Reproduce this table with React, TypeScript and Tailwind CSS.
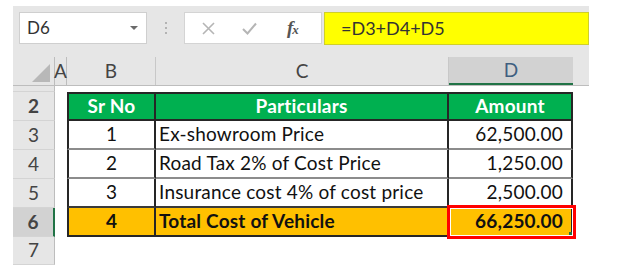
import { ReactNode } from 'react'

const font = "font-['Lato','Noto_Sans',sans-serif]"

type Row = {
  n: number
  sr: string
  text: string
  amount: string
  kind: 'head' | 'data' | 'total'
  bottom: string
}

const rows: Row[] = [
  { n: 2, sr: 'Sr No', text: 'Particulars', amount: 'Amount', kind: 'head', bottom: 'border-b-[#262626]' },
  { n: 3, sr: '1', text: 'Ex-showroom Price', amount: '62,500.00', kind: 'data', bottom: 'border-b-[#8c8c8c]' },
  { n: 4, sr: '2', text: 'Road Tax 2% of Cost Price', amount: '1,250.00', kind: 'data', bottom: 'border-b-[#8c8c8c]' },
  { n: 5, sr: '3', text: 'Insurance cost 4% of cost price', amount: '2,500.00', kind: 'data', bottom: 'border-b-[#3a3a3a]' },
  { n: 6, sr: '4', text: 'Total Cost of Vehicle', amount: '66,250.00', kind: 'total', bottom: 'border-b-[#262626]' },
]

function RowHeader({ n, selected, h }: { n?: number; selected?: boolean; h: string }) {
  return (
    <div
      className={`${h} w-[42px] shrink-0 flex items-center justify-center text-[19px] text-[#444] border-b border-b-[#d4d4d4] ${
        selected
          ? 'bg-[#d2d2d2] border-r-2 border-r-[#217346]'
          : 'bg-[#e6e6e6] border-r border-r-[#bdbdbd]'
      }`}
    >
      {n}
    </div>
  )
}

function Cell({ className, children }: { className: string; children?: ReactNode }) {
  return <div className={`h-full flex items-center border-b-2 ${className}`}>{children}</div>
}

export default function App() {
  return (
    <div className={`w-[636px] h-[269px] bg-white overflow-hidden ${font}`}>
      <div className="ml-[13px] mt-[6px] w-[576px]">
        {/* Formula bar */}
        <div className="h-[51px] bg-[#e6e6e6] flex items-start pt-[6px] pl-[6px]">
          <div className="w-[128px] h-[32px] bg-white border border-[#cfcfcf] flex items-center justify-between pl-[7px] pr-[8px]">
            <span className="text-[17px] text-[#333]">D6</span>
            <span className="w-0 h-0 border-l-[4px] border-r-[4px] border-t-[4px] border-l-transparent border-r-transparent border-t-[#6b6b6b]" />
          </div>
          <div className="w-[37px] h-[32px] flex flex-col items-center justify-center gap-[3px]">
            <span className="w-[2px] h-[2px] bg-[#b3b3b3]" />
            <span className="w-[2px] h-[2px] bg-[#b3b3b3]" />
            <span className="w-[2px] h-[2px] bg-[#b3b3b3]" />
          </div>
          <div className="w-[138px] h-[32px] bg-white border border-[#d4d4d4] flex items-center">
            <svg className="ml-[17px]" width="13" height="13" viewBox="0 0 13 13">
              <path d="M1 1L12 12M12 1L1 12" stroke="#b5b5b5" strokeWidth="1.6" />
            </svg>
            <svg className="ml-[27px]" width="15" height="13" viewBox="0 0 15 13">
              <path d="M1 7L5.5 11.5L14 1.5" stroke="#b5b5b5" strokeWidth="2" fill="none" />
            </svg>
            <span className="ml-[30px] text-[19px] italic font-bold text-[#555] font-['Liberation_Serif',serif] tracking-[-1px]">
              f<span className="text-[13px]">x</span>
            </span>
          </div>
          <div className="ml-[2px] flex-1 h-[33px] bg-[#ffff00] border border-[#cfcf2a] flex items-center pl-[16px]">
            <span className="text-[18px] text-[#333]">=D3+D4+D5</span>
          </div>
        </div>

        {/* Column headers */}
        <div className="h-[29px] bg-[#e6e6e6] flex border-b border-b-[#bdbdbd] text-[19px] text-[#444]">
          <div className="w-[42px] shrink-0 flex items-end justify-end border-r border-r-[#bdbdbd]">
            <svg width="20" height="20" viewBox="0 0 20 20" className="mb-[2px] mr-[3px]">
              <path d="M19 1V19H1Z" fill="#b8b8b8" />
            </svg>
          </div>
          <div className="w-[12px] shrink-0 flex items-center justify-center border-r border-r-[#bdbdbd]">A</div>
          <div className="w-[89px] shrink-0 flex items-center justify-center border-r border-r-[#c8c8c8]">B</div>
          <div className="w-[293px] shrink-0 flex items-center justify-center border-r border-r-[#c8c8c8]">C</div>
          <div className="w-[124px] shrink-0 flex items-center justify-center bg-[#d2d2d2] border-b-2 border-b-[#217346] text-[#3f5f80]">
            D
          </div>
          <div className="flex-1" />
        </div>

        {/* Row 1 (hidden) */}
        <div className="flex h-[6px]">
          <RowHeader h="h-[6px]" />
        </div>

        {rows.map((r) => {
          const head = r.kind === 'head'
          const total = r.kind === 'total'
          const bg = head ? 'bg-[#00b050]' : total ? 'bg-[#ffc000]' : 'bg-white'
          const txt = head ? 'text-white font-bold' : total ? 'text-[#111] font-bold' : 'text-[#111]'
          const top = head ? 'border-t-2 border-t-[#262626]' : ''
          return (
            <div key={r.n} className={`flex h-[29px] text-[19px] tracking-[0.2px] ${txt}`}>
              <RowHeader n={r.n} selected={total} h="h-[29px]" />
              <div className="w-[12px] shrink-0" />
              <Cell className={`w-[89px] justify-center border-l-2 border-l-[#262626] border-r-2 border-r-[#262626] ${r.bottom} ${top} ${bg}`}>
                {r.sr}
              </Cell>
              <Cell className={`w-[293px] ${head ? 'justify-center' : 'pl-[3px]'} border-r-2 border-r-[#262626] ${r.bottom} ${top} ${bg}`}>
                {r.text}
              </Cell>
              <Cell className={`relative w-[124px] ${head ? 'justify-center' : 'justify-end pr-[8px]'} border-r-2 border-r-[#262626] ${r.bottom} ${top} ${bg}`}>
                {r.amount}
                {total && (
                  <div className="absolute -left-[2px] -top-[3px] w-[129px] h-[34px] border-[3px] border-[#ff0000]">
                    <div className="w-full h-full border border-white" />
                    <div className="absolute right-[1px] bottom-[1px] w-[3px] h-[3px] bg-[#217346]" />
                  </div>
                )}
              </Cell>
            </div>
          )
        })}

        {/* Row 7 */}
        <div className="flex h-[28px]">
          <RowHeader n={7} h="h-[28px]" />
        </div>
      </div>
    </div>
  )
}
